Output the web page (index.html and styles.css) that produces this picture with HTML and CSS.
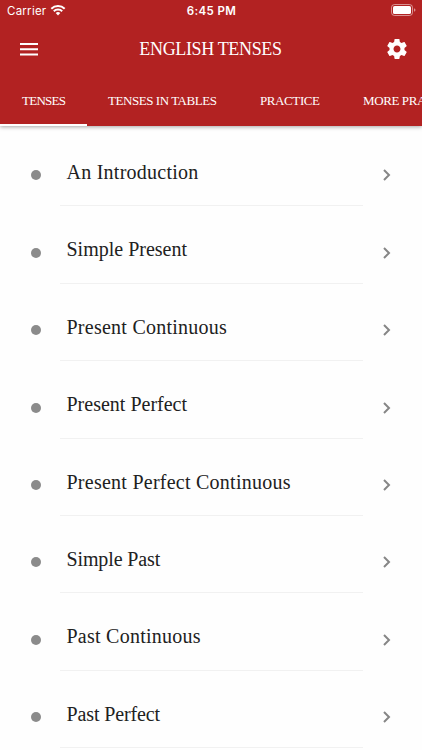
FILE: index.html
```
<!DOCTYPE html>
<html lang="en">
   <head>
      <meta charset="utf-8">
      <meta name="viewport" content="width=device-width, initial-scale=1">
      <title>English Tenses</title>
      <link rel="stylesheet" href="styles.css">
   </head>
   <body>
      <header class="header">
         <div class="statusbar">
            <div class="carrier">
               <span>Carrier</span>
               <svg class="wifi" viewBox="0 0 16 12">
                  <path d="M1.3 4.7a9.6 9.6 0 0 1 13.4 0M3.8 7.2a6 6 0 0 1 8.4 0" />
                  <path class="solid" d="M5.7 9a3.3 3.3 0 0 1 4.6 0L8 11.5z" />
               </svg>
            </div>
            <div class="clock">6:45 PM</div>
            <svg class="battery" viewBox="0 0 25 12">
               <rect class="shell" x=".5" y=".5" width="21" height="11" rx="3" />
               <rect x="2" y="2" width="18" height="8" rx="1.6" />
               <path class="tip" d="M23 4.2q1.5.5 1.5 1.8T23 7.8z" />
            </svg>
         </div>
         <div class="appbar">
            <svg class="menu" viewBox="0 0 18 13">
               <path d="M0 0h18v2H0zM0 5.3h18v2H0zM0 10.6h18v2H0z" />
            </svg>
            <h1>ENGLISH TENSES</h1>
            <svg class="gear" viewBox="2 2 20 20">
               <path d="M19.43 12.98c.04-.32.07-.64.07-.98s-.03-.66-.07-.98l2.11-1.65c.19-.15.24-.42.12-.64l-2-3.46c-.12-.22-.39-.3-.61-.22l-2.49 1c-.52-.4-1.08-.73-1.69-.98l-.38-2.65C14.46 2.18 14.25 2 14 2h-4c-.25 0-.46.18-.49.42l-.38 2.65c-.61.25-1.17.59-1.69.98l-2.49-1c-.23-.09-.49 0-.61.22l-2 3.46c-.13.22-.07.49.12.64l2.11 1.65c-.04.32-.07.65-.07.98s.03.66.07.98l-2.11 1.65c-.19.15-.24.42-.12.64l2 3.46c.12.22.39.3.61.22l2.49-1c.52.4 1.08.73 1.69.98l.38 2.65c.03.24.24.42.49.42h4c.25 0 .46-.18.49-.42l.38-2.65c.61-.25 1.17-.59 1.69-.98l2.49 1c.23.09.49 0 .61-.22l2-3.46c.12-.22.07-.49-.12-.64l-2.11-1.65zM12 15.5c-1.93 0-3.5-1.57-3.5-3.5s1.57-3.5 3.5-3.5 3.5 1.57 3.5 3.5-1.57 3.5-3.5 3.5z" />
            </svg>
         </div>
         <nav class="tabs">
            <a class="tab active">TENSES</a>
            <a class="tab tables">TENSES IN TABLES</a>
            <a class="tab practice">PRACTICE</a>
            <a class="tab more">MORE PRACTICE</a>
         </nav>
      </header>
      <ul class="lessons">
         <li>
            <span class="dot"></span><span class="name wide">An Introduction</span>
            <svg class="chevron" viewBox="0 0 8 12"><path d="M1 1l5 5-5 5" /></svg>
         </li>
         <li>
            <span class="dot"></span><span class="name">Simple Present</span>
            <svg class="chevron" viewBox="0 0 8 12"><path d="M1 1l5 5-5 5" /></svg>
         </li>
         <li>
            <span class="dot"></span><span class="name wide">Present Continuous</span>
            <svg class="chevron" viewBox="0 0 8 12"><path d="M1 1l5 5-5 5" /></svg>
         </li>
         <li>
            <span class="dot"></span><span class="name">Present Perfect</span>
            <svg class="chevron" viewBox="0 0 8 12"><path d="M1 1l5 5-5 5" /></svg>
         </li>
         <li>
            <span class="dot"></span><span class="name wide">Present Perfect Continuous</span>
            <svg class="chevron" viewBox="0 0 8 12"><path d="M1 1l5 5-5 5" /></svg>
         </li>
         <li>
            <span class="dot"></span><span class="name narrow">Simple Past</span>
            <svg class="chevron" viewBox="0 0 8 12"><path d="M1 1l5 5-5 5" /></svg>
         </li>
         <li>
            <span class="dot"></span><span class="name wide">Past Continuous</span>
            <svg class="chevron" viewBox="0 0 8 12"><path d="M1 1l5 5-5 5" /></svg>
         </li>
         <li>
            <span class="dot"></span><span class="name narrow">Past Perfect</span>
            <svg class="chevron" viewBox="0 0 8 12"><path d="M1 1l5 5-5 5" /></svg>
         </li>
      </ul>
   </body>
</html>
```

FILE: styles.css
```
* {
   box-sizing: border-box;
}

body {
   margin: 0;
   height: 100vh;
   overflow: hidden;
   background: #fefefe;
   color: #212121;
   font-family: "Liberation Serif", "Times New Roman", serif;
}

.header {
   height: 126px;
   background: #b22222;
   color: #fff;
   box-shadow: 0 1px 4px rgba(0, 0, 0, 0.35);
}

.header svg {
   fill: #fff;
}

/* phone status bar */
.statusbar {
   display: grid;
   grid-template-columns: 1fr auto 1fr;
   align-items: center;
   height: 22px;
   padding: 0 6px 0 7px;
   font-family: Inter, sans-serif;
   font-size: 11.5px;
}

.carrier {
   display: flex;
   align-items: center;
   gap: 4px;
   letter-spacing: 0.25px;
}

.header .wifi {
   width: 16px;
   height: 12px;
   margin-top: -2px;
}

.wifi path {
   fill: none;
   stroke: #fff;
   stroke-width: 2;
}

.wifi .solid {
   fill: #fff;
   stroke: none;
}

.clock {
   font-weight: 600;
   letter-spacing: 0.4px;
}

.battery {
   justify-self: end;
   width: 25px;
   height: 12px;
   margin-top: -2px;
}

.header .shell {
   fill: none;
   stroke: #fff;
   stroke-opacity: 0.5;
}

.tip {
   opacity: 0.5;
}

/* title row */
.appbar {
   display: flex;
   align-items: center;
   justify-content: space-between;
   height: 54px;
   padding: 0 15px 0 20px;
}

.menu {
   width: 18px;
   height: 13px;
}

.appbar h1 {
   margin: 0 4px 0 0;
   font-size: 18px;
   font-weight: normal;
   letter-spacing: -0.35px;
}

.gear {
   width: 20px;
   height: 20px;
}

.tabs {
   display: flex;
   height: 50px;
   overflow: hidden;
   white-space: nowrap;
   font-size: 13px;
   line-height: 50px;
}

.tab {
   flex: none;
   width: 87px;
   padding-left: 22px;
   letter-spacing: -0.75px;
}

.active {
   border-bottom: 2px solid #fff;
}

.tables {
   width: 151px;
   padding-left: 21px;
   letter-spacing: -0.45px;
}

.practice {
   width: 103px;
   letter-spacing: -0.4px;
}

.more {
   width: 140px;
   letter-spacing: -0.4px;
}

.lessons {
   list-style: none;
   margin: 0;
   padding: 3px 0 0;
}

.lessons li {
   display: grid;
   grid-template-columns: 60px 303px 1fr;
   height: 77.4px;
}

.dot {
   width: 10px;
   height: 10px;
   margin: 41.4px 0 0 31px;
   border-radius: 50%;
   background: #8b8b8b;
}

.name {
   padding: 32px 0 0 6.5px;
   border-bottom: 1px solid #f1f1f1;
   font-size: 20px;
   line-height: 23px;
}

.wide {
   letter-spacing: 0.25px;
}

.narrow {
   letter-spacing: -0.13px;
}

.chevron {
   width: 8px;
   height: 12px;
   margin: 40.4px 0 0 20px;
   fill: none;
   stroke: #868686;
   stroke-width: 2;
}
```
